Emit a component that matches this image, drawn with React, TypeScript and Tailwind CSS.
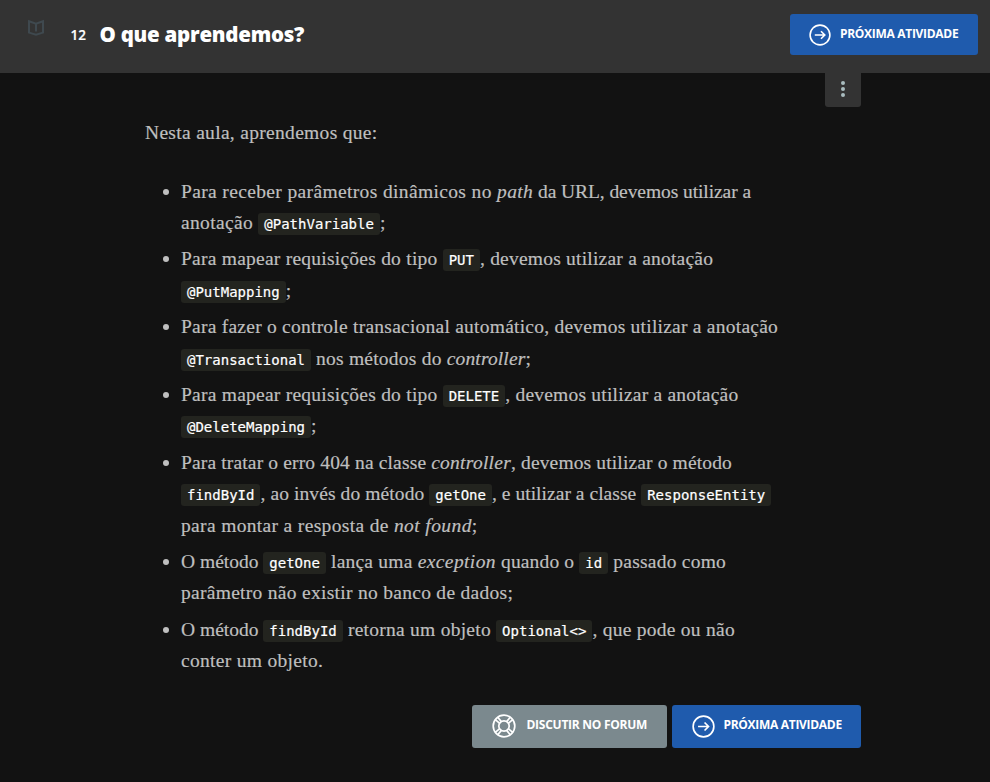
import React from "react";

type RunProps = { children: React.ReactNode; t?: string };

function T({ children, t = "tracking-[0.22px]" }: RunProps) {
  return <span className={`whitespace-pre ${t}`}>{children}</span>;
}

function I({ children, t = "tracking-[0.4px]" }: RunProps) {
  return <em className={`whitespace-pre italic ${t}`}>{children}</em>;
}

function Code({ children }: { children: React.ReactNode }) {
  return (
    <code className="rounded-[3px] bg-[#23241f] px-[6px] py-[3px] font-['DejaVu_Sans_Mono',monospace] text-[14px] leading-none text-white">
      {children}
    </code>
  );
}

function Line({ children }: { children: React.ReactNode }) {
  return <span className="block h-[31.5px] whitespace-nowrap leading-[31.5px]">{children}</span>;
}

function Item({ children }: { children: React.ReactNode }) {
  return (
    <li className="flex">
      <span className="mt-[13px] mr-[12px] ml-[18px] size-[6px] shrink-0 rounded-full bg-[#bfbfbf]" />
      <div>{children}</div>
    </li>
  );
}

function ArrowCircle({ className }: { className: string }) {
  return (
    <svg viewBox="0 0 22 22" className={className} fill="none" stroke="currentColor" strokeWidth="1.6">
      <circle cx="11" cy="11" r="9.9" />
      <path d="M5.8 11h10M12 7.200 15.800 11l-3.800 3.800" />
    </svg>
  );
}

function Buoy() {
  return (
    <svg viewBox="0 0 24 24" className="mb-px size-6 shrink-0" fill="none" stroke="currentColor" strokeWidth="1.7">
      <circle cx="12" cy="12" r="10.8" />
      <circle cx="12" cy="12" r="5.2" />
      <path d="M9.200 7.400 5.700 3.300M7.400 9.200 3.300 5.700M14.800 7.400 18.300 3.300M16.600 9.200 20.700 5.700M9.200 16.600 5.700 20.700M7.400 14.800 3.300 18.300M14.800 16.600 18.300 20.700M16.600 14.800 20.700 18.300" />
    </svg>
  );
}

export default function App() {
  return (
    <div className="h-[782px] w-[990px] overflow-hidden bg-[#121212] font-['Open_Sans',sans-serif]">
      <header className="flex h-[73px] items-start bg-[#333333] text-white">
        <svg viewBox="0 0 18 18" className="mt-[19px] ml-[27px] size-[18px] text-[#3f494f]" fill="none" stroke="currentColor" strokeWidth="2">
          <path d="M2 2.200 9 4.600 16 2.200V13.600L9 15.800 2 13.600zM9 4.600v7.800" />
        </svg>
        <span className="mt-[25px] ml-[25.500px] w-[29px] text-[13.500px] leading-5 font-semibold [-webkit-text-stroke:0.2px]">12</span>
        <h1 className="mt-[19px] text-[20.500px] leading-[30px] font-extrabold tracking-[-0.25px] whitespace-nowrap">O que aprendemos?</h1>
        <button className="mt-[14px] mr-[12px] ml-auto flex h-[41px] w-[188px] items-center rounded-[3px] bg-[#1f5bad] pl-[19px]">
          <ArrowCircle className="size-[22px] shrink-0" />
          <span className="mb-[2px] ml-[9px] text-[12px] font-bold tracking-[-0.3px] whitespace-nowrap">PRÓXIMA ATIVIDADE</span>
        </button>
      </header>

      <main className="ml-[145px] w-[716px]">
        <div className="flex h-[34px] justify-end">
          <button className="flex w-[36px] flex-col items-center justify-center gap-[2.400px] rounded-b-[3px] bg-[#333333] pb-[2px]">
            <i className="size-1 rounded-full bg-[#a9bcbf]" />
            <i className="size-1 rounded-full bg-[#a9bcbf]" />
            <i className="size-1 rounded-full bg-[#a9bcbf]" />
          </button>
        </div>

        <article className="h-[598px] pt-[10px] font-['Liberation_Serif',serif] text-[19.500px] text-[#bfbfbf] [-webkit-text-stroke:0.2px]">
          <p className="mb-[27px] leading-[31.5px]"><T t="tracking-[0.31px]">Nesta aula, aprendemos que:</T></p>
          <ul className="flex flex-col gap-[4.800px]">
            <Item>
              <Line><T t="tracking-[0.36px]">Para receber parâmetros dinâmicos no </T><I>path</I><T t="tracking-[-0.08px]"> da URL, devemos utilizar a</T></Line>
              <Line><T t="tracking-[0.35px]">anotação </T><Code>@PathVariable</Code><T>;</T></Line>
            </Item>
            <Item>
              <Line><T t="tracking-[0.24px]">Para mapear requisições do tipo </T><Code>PUT</Code><T>, devemos utilizar a anotação</T></Line>
              <Line><Code>@PutMapping</Code><T>;</T></Line>
            </Item>
            <Item>
              <Line><T t="tracking-[0.24px]">Para fazer o controle transacional automático, devemos utilizar a anotação</T></Line>
              <Line><Code>@Transactional</Code><T> nos métodos do </T><I t="tracking-[0.15px]">controller</I><T>;</T></Line>
            </Item>
            <Item>
              <Line><T t="tracking-[0.24px]">Para mapear requisições do tipo </T><Code>DELETE</Code><T>, devemos utilizar a anotação</T></Line>
              <Line><Code>@DeleteMapping</Code><T>;</T></Line>
            </Item>
            <Item>
              <Line><T t="tracking-[0.15px]">Para tratar o erro 404 na classe </T><I t="tracking-[0.25px]">controller</I><T t="tracking-[0.14px]">, devemos utilizar o método</T></Line>
              <Line><Code>findById</Code><T t="tracking-[0.1px]">, ao invés do método </T><Code>getOne</Code><T t="tracking-[0.04px]">, e utilizar a classe </T><Code>ResponseEntity</Code></Line>
              <Line><T t="tracking-[0.34px]">para montar a resposta de </T><I>not found</I><T>;</T></Line>
            </Item>
            <Item>
              <Line><T t="tracking-normal">O método </T><Code>getOne</Code><T> lança uma </T><I>exception</I><T t="tracking-[0.15px]"> quando o </T><Code>id</Code><T t="tracking-[0.24px]"> passado como</T></Line>
              <Line><T t="tracking-[0.29px]">parâmetro não existir no banco de dados;</T></Line>
            </Item>
            <Item>
              <Line><T t="tracking-normal">O método </T><Code>findById</Code><T t="tracking-[0.26px]"> retorna um objeto </T><Code>{"Optional<>"}</Code><T t="tracking-[0.26px]">, que pode ou não</T></Line>
              <Line><T t="tracking-[0.3px]">conter um objeto.</T></Line>
            </Item>
          </ul>
        </article>

        <div className="flex justify-end gap-[5px] text-white">
          <button className="flex h-[43px] w-[195px] items-center rounded-[3px] bg-[#7b898e] pl-[19.500px]">
            <Buoy />
            <span className="mb-[3px] ml-[11px] text-[12px] font-bold tracking-[-0.26px] whitespace-nowrap">DISCUTIR NO FORUM</span>
          </button>
          <button className="flex h-[43px] w-[189px] items-center rounded-[3px] bg-[#1f5bad] pl-[19.500px]">
            <ArrowCircle className="size-[23px] shrink-0" />
            <span className="mb-[3px] ml-[9px] text-[12px] font-bold tracking-[-0.3px] whitespace-nowrap">PRÓXIMA ATIVIDADE</span>
          </button>
        </div>
      </main>
    </div>
  );
}
